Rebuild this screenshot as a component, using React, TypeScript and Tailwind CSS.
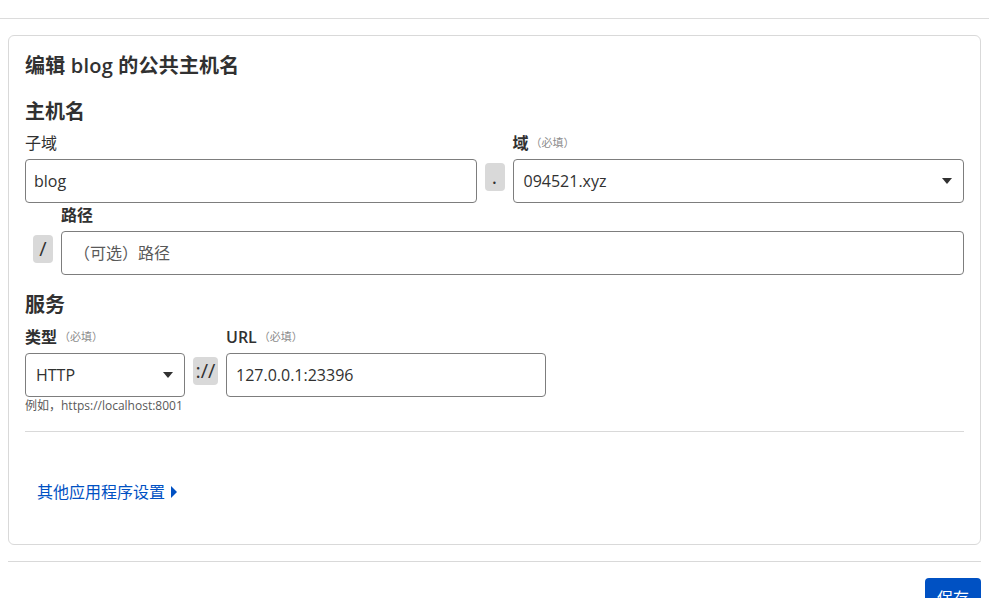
import React from 'react';

const font = { fontFamily: '"Open Sans", "Noto Sans CJK SC", sans-serif' };

function Caret() {
  return (
    <svg width="10" height="6" viewBox="0 0 10 6" className="shrink-0">
      <path d="M0 0 L10 0 L5 6 Z" fill="#313131" />
    </svg>
  );
}

function Sep({ text, wide = false }: { text: string; wide?: boolean }) {
  return (
    <div className={`${wide ? 'w-[41px]' : 'w-[36px]'} shrink-0 flex justify-center pt-[4px]`}>
      <div className={`${wide ? 'w-[25px]' : 'w-[20px]'} h-[28px] rounded-[4px] bg-[#d9d9d9] flex items-center justify-center text-[#313131] text-[20px] leading-none`}>
        {text}
      </div>
    </div>
  );
}

function Label({ text, required = false, light = false }: { text: string; required?: boolean; light?: boolean }) {
  return (
    <div className="h-[24px] flex items-center gap-[2px] mb-[4px]">
      <span className={`text-[16px] ${light ? 'font-normal' : 'font-semibold'} text-[#313131]`}>{text}</span>
      {required && <span className="text-[11px] text-[#8c8c8c]">（必填）</span>}
    </div>
  );
}

export default function App() {
  return (
    <div className="w-[989px] h-[598px] overflow-hidden bg-white text-[#313131]" style={font}>
      <div className="h-[19px] border-b border-[#dcdcdc]" />
      <div className="px-[8px]">
        <div className="mt-[16px] rounded-[6px] border border-[#d9d9d9] px-[16px] pt-[15px] pb-[40px]">
          <h2 className="text-[20px] leading-[30px] font-semibold tracking-[0.2px]">编辑 blog 的公共主机名</h2>

          <h3 className="mt-[16px] text-[20px] leading-[30px] font-semibold">主机名</h3>
          <div className="mt-[4px] flex">
            <div className="flex-1">
              <Label text="子域" light />
              <div className="h-[44px] rounded-[4px] border border-[#7d7d7d] px-[8px] flex items-center text-[16px]">blog</div>
            </div>
            <div className="pt-[28px]">
              <Sep text="." />
            </div>
            <div className="flex-1">
              <Label text="域" required />
              <div className="h-[44px] rounded-[4px] border border-[#7d7d7d] pl-[10px] pr-[11px] flex items-center justify-between text-[16px]">
                <span>094521.xyz</span>
                <Caret />
              </div>
            </div>
          </div>

          <div className="flex">
            <div className="pt-[28px]">
              <Sep text="/" />
            </div>
            <div className="flex-1">
              <Label text="路径" />
              <div className="h-[44px] rounded-[4px] border border-[#7d7d7d] px-[12px] flex items-center text-[16px] text-[#595959]">（可选）路径</div>
            </div>
          </div>

          <h3 className="mt-[15px] text-[20px] leading-[30px] font-semibold">服务</h3>
          <div className="mt-[5px] flex">
            <div className="w-[160px]">
              <Label text="类型" required />
              <div className="h-[44px] rounded-[4px] border border-[#7d7d7d] pl-[10px] pr-[11px] flex items-center justify-between text-[16px]">
                <span>HTTP</span>
                <Caret />
              </div>
              <div className="text-[12px] leading-[18px] text-[#595959] whitespace-nowrap">例如，https://localhost:8001</div>
            </div>
            <div className="pt-[28px]">
              <Sep text="://" wide />
            </div>
            <div className="w-[320px]">
              <Label text="URL" required />
              <div className="h-[44px] rounded-[4px] border border-[#7d7d7d] px-[9px] flex items-center text-[16px]">127.0.0.1:23396</div>
            </div>
          </div>

          <div className="mt-[16px] border-t border-[#d9d9d9]" />

          <a className="mt-[48px] ml-[12px] inline-flex items-center gap-[6px] text-[16px] leading-[24px] text-[#0051c3]">
            其他应用程序设置
            <svg width="6" height="12" viewBox="0 0 6 12">
              <path d="M0 0 L6 6 L0 12 Z" fill="#0051c3" />
            </svg>
          </a>
        </div>

        <div className="mt-[16px] border-t border-[#d9d9d9]" />
        <div className="mt-[16px] flex justify-end">
          <button className="h-[40px] px-[12px] rounded-[4px] bg-[#0051c3] text-white text-[16px]">保存</button>
        </div>
      </div>
    </div>
  );
}
